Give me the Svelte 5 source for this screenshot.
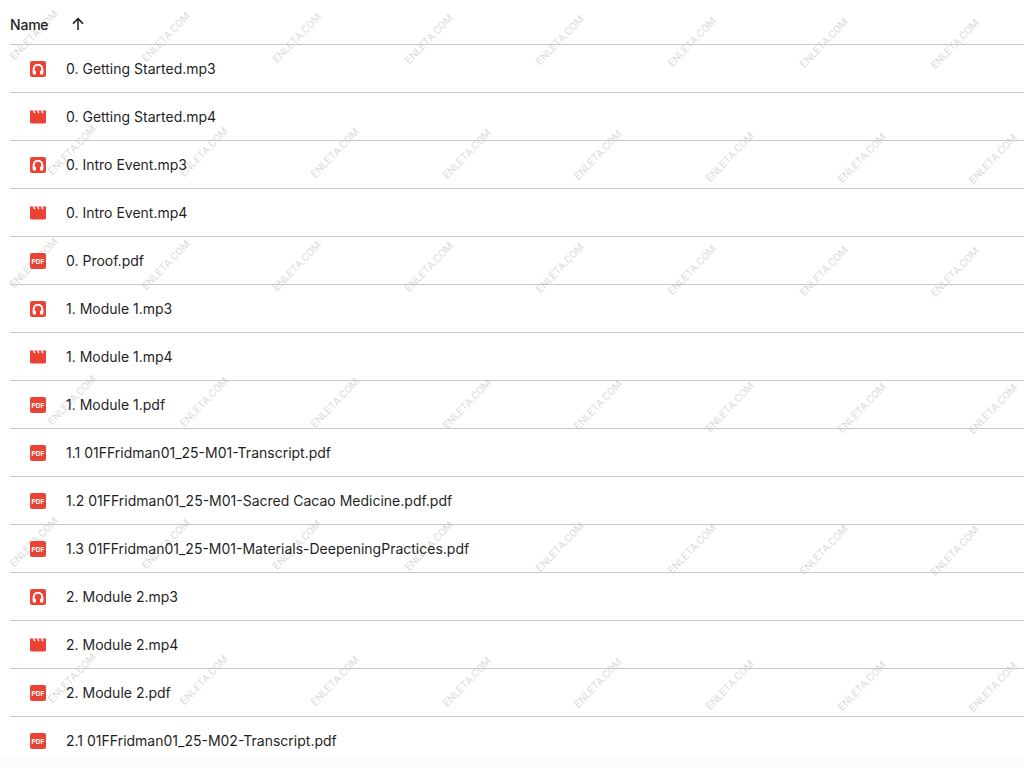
<script lang="ts">
  const files = [
    ['audio', '0. Getting Started.mp3'],
    ['video', '0. Getting Started.mp4'],
    ['audio', '0. Intro Event.mp3'],
    ['video', '0. Intro Event.mp4'],
    ['pdf', '0. Proof.pdf'],
    ['audio', '1. Module 1.mp3'],
    ['video', '1. Module 1.mp4'],
    ['pdf', '1. Module 1.pdf'],
    ['pdf', '1.1 01FFridman01_25-M01-Transcript.pdf'],
    ['pdf', '1.2 01FFridman01_25-M01-Sacred Cacao Medicine.pdf.pdf'],
    ['pdf', '1.3 01FFridman01_25-M01-Materials-DeepeningPractices.pdf'],
    ['audio', '2. Module 2.mp3'],
    ['video', '2. Module 2.mp4'],
    ['pdf', '2. Module 2.pdf'],
    ['pdf', '2.1 01FFridman01_25-M02-Transcript.pdf']
  ];

  // watermark grid: odd bands sit half a step to the right, and it drifts down slightly
  const bands = [
    { y: 35, x: 34 },
    { y: 150, x: 72 },
    { y: 263, x: 34 },
    { y: 400, x: 72 },
    { y: 542, x: 34 },
    { y: 678, x: 72 }
  ];
  const marks = bands.flatMap((b) =>
    Array.from({ length: 8 }, (_, i) => {
      const x = b.x + i * 131.6;
      return { x, y: b.y + Math.floor(i / 2) * 2.6 + (i % 2) * 1.5 };
    })
  );
</script>

<div class="page">
  {#each marks as m}
    <span class="mark" style="left: {m.x}px; top: {m.y}px">ENLETA.COM</span>
  {/each}

  <div class="head">
    <span class="head-name">Name</span>
    <svg class="sort" width="16" height="16" viewBox="0 0 16 16" aria-hidden="true">
      <path d="M8 14V3M3 7.600 8 2.600l5 5" fill="none" stroke="#1f1f1f" stroke-width="1.500"/>
    </svg>
  </div>

  {#each files as [kind, name], i}
    <div class="row" class:last={i === files.length - 1}>
      <svg class="icon" width="16" height="16" viewBox="0 0 16 16" aria-hidden="true">
        {#if kind === 'audio'}
          <rect width="16" height="16" rx="2" fill="#ea4335"/>
          <path d="M3.700 11V8a4.300 4.300 0 0 1 8.600 0v3" fill="none" stroke="#fff" stroke-width="2"/>
          <rect x="2.700" y="9.400" width="3.300" height="4" rx="1" fill="#fff"/>
          <rect x="10" y="9.400" width="3.300" height="4" rx="1" fill="#fff"/>
        {:else if kind === 'video'}
          <path d="M0 1.500h16V13a1.500 1.500 0 0 1-1.500 1.500h-13A1.500 1.500 0 0 1 0 13z" fill="#ea4335"/>
          <path d="M3 1.500h1.500l1 2.800H4zM7 1.500h1.500l1 2.800H8zM11 1.500h1.500l1 2.800H12z" fill="#fff"/>
        {:else}
          <rect width="16" height="16" rx="2" fill="#ea4335"/>
          <text class="pdf" x="8" y="10.600" text-anchor="middle">PDF</text>
        {/if}
      </svg>
      <span class="name">{name}</span>
    </div>
  {/each}

  <div class="fade"></div>
</div>

<style>
  :global(body) {
    background: #fff;
  }
  .page {
    position: relative;
    height: 768px;
    overflow: hidden;
    padding-left: 10px;
    font-family: Inter, "Noto Sans", sans-serif;
    color: #1f1f1f;
    background: #fff;
  }
  .head {
    position: relative;
    display: flex;
    align-items: center;
    height: 38px;
    padding-top: 6px;
    border-bottom: 1px solid #c7c7c7;
  }
  .head-name {
    font-size: 14px;
    font-weight: 500;
    letter-spacing: -0.2px;
    width: 60px;
    margin-top: -2px;
  }
  .sort {
    margin-top: -3px;
  }
  .row {
    position: relative;
    display: flex;
    align-items: center;
    height: 47px;
    padding-left: 20px;
    border-bottom: 1px solid #c7c7c7;
  }
  .row.last {
    border-bottom: none;
  }
  .icon {
    flex: none;
    margin-right: 20px;
  }
  .name {
    font-size: 14px;
    white-space: nowrap;
  }
  .pdf {
    font-family: "Liberation Sans", sans-serif;
    font-size: 6.500px;
    font-weight: 700;
    fill: #fff;
  }
  .mark {
    position: absolute;
    transform: translate(-50%, -50%) rotate(-46deg);
    font-family: Roboto, sans-serif;
    font-size: 10.500px;
    color: #dcdcdc;
    white-space: nowrap;
    pointer-events: none;
  }
  .fade {
    position: absolute;
    left: 0;
    right: 0;
    bottom: 0;
    height: 14px;
    background: linear-gradient(#fdfeff, #f7f9fc);
  }
</style>
